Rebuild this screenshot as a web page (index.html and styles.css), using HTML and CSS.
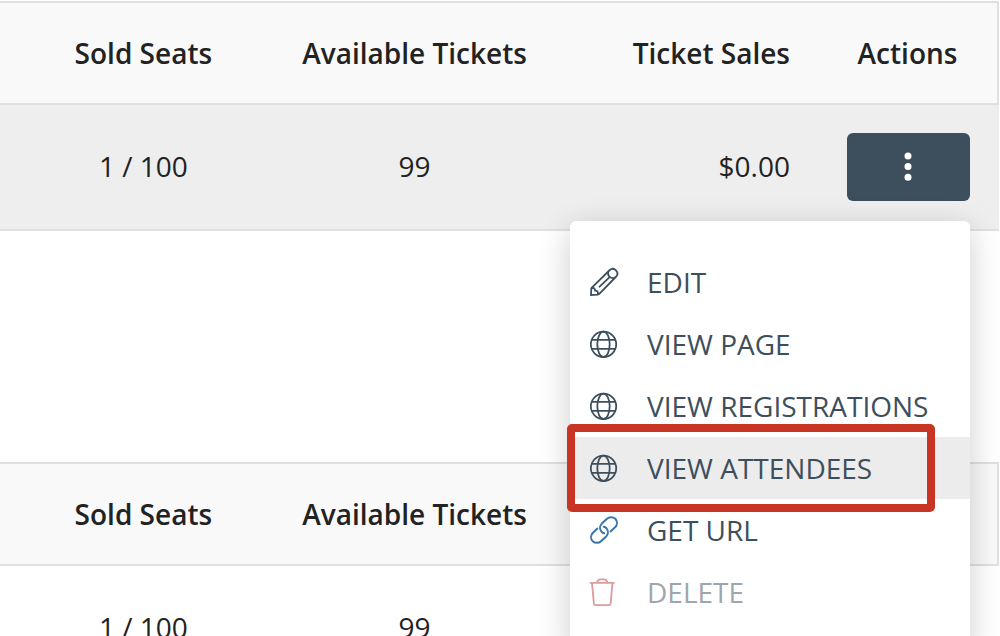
FILE: index.html
```html
<!DOCTYPE html>
<html lang="en">
<head>
    <meta charset="UTF-8">
    <meta name="viewport" content="width=device-width, initial-scale=1.0">
    <title>Events</title>
    <link rel="stylesheet" href="styles.css">
</head>
<body>
    <svg class="sprite" aria-hidden="true">
        <symbol id="icon-globe" viewBox="0 0 28 28">
            <circle cx="13.5" cy="14.3" r="12.7"/>
            <ellipse cx="13.5" cy="14.3" rx="6.2" ry="12.7"/>
            <path d="M2 9.8h23M2 18.8h23"/>
        </symbol>
    </svg>

    <table class="events">
        <thead>
            <tr>
                <th class="col-seats">Sold Seats</th>
                <th class="col-tickets">Available Tickets</th>
                <th class="col-sales">Ticket Sales</th>
                <th class="col-actions">Actions</th>
            </tr>
        </thead>
        <tbody>
            <tr class="active">
                <td>1 / 100</td>
                <td>99</td>
                <td class="col-sales">$0.00</td>
                <td class="col-actions">
                    <div class="dropdown">
                        <button type="button" class="btn-actions" aria-label="Actions">
                            <svg width="9" height="30" viewBox="0 0 9 30"><circle cx="4" cy="4" r="3.5"/><circle cx="4" cy="14.6" r="3.5"/><circle cx="4" cy="25.3" r="3.5"/></svg>
                        </button>
                        <div class="menu">
                            <a href="#edit" class="menu-item">
                                <svg class="icon icon-edit" viewBox="0 0 28 28"><path d="M.9 27.2 1.3 21c0-.7.3-1.2.8-1.7L19.8 2c1.8-1.6 3.9-1.6 5.6-.1l.9.9c1.5 1.7 1.5 3.9-.1 5.7L9.3 25.8c-.6.5-1.1.8-1.9.9z"/><path d="M1.6 20.2c2.2-.6 3.4.2 3.3 2.4 2.2-.3 3.4.9 3 3.7M18 3.9c-.3 4.3 1.8 6.5 6.2 6.3M9.6 18.7 19.4 9.4"/></svg>
                                Edit
                            </a>
                            <a href="#page" class="menu-item">
                                <svg class="icon"><use href="#icon-globe"/></svg>
                                View Page
                            </a>
                            <a href="#registrations" class="menu-item">
                                <svg class="icon"><use href="#icon-globe"/></svg>
                                View Registrations
                            </a>
                            <a href="#attendees" class="menu-item selected">
                                <svg class="icon"><use href="#icon-globe"/></svg>
                                View Attendees
                            </a>
                            <a href="#url" class="menu-item">
                                <svg class="icon icon-link" viewBox="0 0 28 28"><path d="M7.4 12.6 2.7 17a6 6 0 0 0 0 8.2 6 6 0 0 0 8.3 0l5.2-4.8a6 6 0 0 0 .3-8.1c-.8-.8-1.7-1.3-2.7-1.5"/><path d="M20.6 15.4 25.3 11a6 6 0 0 0 0-8.2 6 6 0 0 0-8.3 0l-5.2 4.8a6 6 0 0 0-.3 8.1c.8.8 1.7 1.3 2.7 1.5"/></svg>
                                Get URL
                            </a>
                            <a href="#delete" class="menu-item disabled">
                                <svg class="icon icon-delete" viewBox="0 0 28 28"><path d="M.5 4.8H24M2 4.8l1.9 20.8c.1 1 .7 1.6 1.7 1.6h13.3c1 0 1.6-.6 1.7-1.6l1.9-20.8M7 4.8c.5-2.2 1.5-3.4 3.3-3.4h3.8c1.8 0 2.8 1.2 3.3 3.4"/></svg>
                                Delete
                            </a>
                        </div>
                    </div>
                </td>
            </tr>
        </tbody>
    </table>

    <table class="events">
        <thead>
            <tr>
                <th class="col-seats">Sold Seats</th>
                <th class="col-tickets">Available Tickets</th>
                <th class="col-sales">Ticket Sales</th>
                <th class="col-actions">Actions</th>
            </tr>
        </thead>
        <tbody>
            <tr>
                <td>1 / 100</td>
                <td>99</td>
                <td class="col-sales">$0.00</td>
                <td class="col-actions">
                    <button type="button" class="btn-actions" aria-label="Actions">
                        <svg width="9" height="30" viewBox="0 0 9 30"><circle cx="4" cy="4" r="3.5"/><circle cx="4" cy="14.6" r="3.5"/><circle cx="4" cy="25.3" r="3.5"/></svg>
                    </button>
                </td>
            </tr>
        </tbody>
    </table>
</body>
</html>
```
FILE: styles.css
```css
body {
    margin: 0;
    padding: 1px 1px 0 0;
    background-color: #fff;
    color: #222;
    font-family: "Open Sans", sans-serif;
    font-size: 28px;
    line-height: 38px;
    overflow-x: hidden;
}

.sprite {
    position: absolute;
    width: 0;
    height: 0;
}

.events {
    width: 100%;
    table-layout: fixed;
    border-collapse: separate;
    border-spacing: 0;
    margin-bottom: 231px;
}

.events th {
    padding: 31px 0;
    background-color: #f9f9f9;
    border-top: 2px solid #e0e0e0;
    border-bottom: 2px solid #e0e0e0;
    font-weight: 600;
}

.events th:last-child {
    border-right: 2px solid #e0e0e0;
}

.events td {
    padding: 27px 0 29px;
    border-bottom: 2px solid #e0e0e0;
    text-align: center;
}

.events .active td {
    background-color: #eee;
}

.col-seats {
    width: 28.7%;
}

.col-tickets {
    width: 25.6%;
}

.events .col-sales {
    padding-right: 28px;
    text-align: right;
}

.events .col-actions {
    width: 179px;
}

.events td.col-actions {
    width: auto;
    padding: 28px 29px 28px 0;
    text-align: right;
}

.dropdown {
    position: relative;
}

.btn-actions {
    display: inline-flex;
    align-items: center;
    justify-content: center;
    width: 123px;
    height: 68px;
    padding: 0;
    border: none;
    border-radius: 6px;
    background-color: #3d4f5d;
    vertical-align: top;
    cursor: pointer;
}

.btn-actions svg {
    fill: #fff;
}

.menu {
    position: absolute;
    top: calc(100% + 20px);
    right: 0;
    z-index: 10;
    box-sizing: border-box;
    width: 400px;
    padding: 30px 0;
    border-radius: 6px;
    background-color: #fff;
    box-shadow: 0 8px 32px rgba(0, 0, 0, 0.2);
}

.menu-item {
    display: flex;
    align-items: center;
    gap: 29px;
    position: relative;
    padding: 12px 20px;
    color: #3d4f5d;
    text-decoration: none;
    text-transform: uppercase;
    white-space: nowrap;
}

.menu-item:hover,
.menu-item.selected {
    background-color: #ececec;
}

/* red frame round the highlighted item */
.menu-item.selected::after {
    content: "";
    position: absolute;
    top: -13px;
    right: 35px;
    bottom: -13px;
    left: -3px;
    z-index: 1;
    border: 8px solid #c83524;
    border-radius: 5px;
}

.menu-item.disabled {
    opacity: 0.5;
}

.icon {
    flex: none;
    width: 28px;
    height: 28px;
    overflow: visible;
    fill: none;
    stroke: #3d4f5d;
    stroke-width: 1.8;
    stroke-linecap: round;
    stroke-linejoin: round;
}

.icon-link {
    stroke: #3876ac;
    stroke-width: 2;
}

.icon-delete {
    stroke: #b83c3c;
}
```
